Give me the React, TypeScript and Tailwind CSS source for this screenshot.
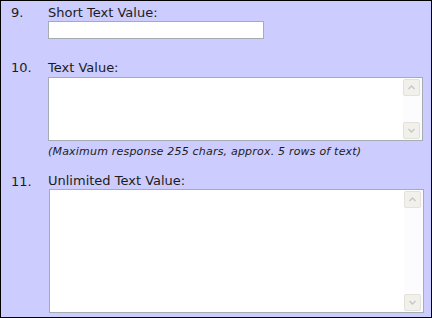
import React from "react";

const ScrollBtn = ({ dir }: { dir: "up" | "down" }) => (
  <div className="flex h-[17px] w-[17px] items-center justify-center rounded-[2px] border border-[#e3e1d9] bg-[#f1f0ea]">
    <svg width="7" height="5" viewBox="0 0 7 5">
      <path
        d={dir === "up" ? "M0.5 4 L3.5 1 L6.5 4" : "M0.5 1 L3.5 4 L6.5 1"}
        fill="none"
        stroke="#c4c6cc"
        strokeWidth="1.4"
      />
    </svg>
  </div>
);

const TextBox = ({ height }: { height: string }) => (
  <div className={`flex w-[375px] border border-[#a5acb2] bg-white ${height}`}>
    <textarea className="flex-1 resize-none overflow-hidden bg-white outline-none" />
    <div className="flex w-[19px] flex-col justify-between bg-[#fcfcfe] py-px pr-[2px]">
      <ScrollBtn dir="up" />
      <ScrollBtn dir="down" />
    </div>
  </div>
);

const Row = ({ num, label, children, numClass = "" }: { num: string; label: string; children: React.ReactNode; numClass?: string }) => (
  <div className="flex">
    <div className={`ml-[10px] w-[37px] leading-[13px] ${numClass}`}>{num}</div>
    <div className="flex flex-col">
      <div className="leading-[13px]">{label}</div>
      {children}
    </div>
  </div>
);

export default function App() {
  return (
    <div
      className="flex h-[318px] w-[432px] flex-col border border-black bg-[#ccccff] pt-[5px] text-[13px] text-[#1c1c1c]"
      style={{ fontFamily: '"DejaVu Sans", Verdana, sans-serif' }}
    >
      <Row num="9." label="Short Text Value:">
        <input className="mt-[2px] h-[18px] w-[216px] border border-[#a5acb2] bg-white outline-none" />
      </Row>
      <div className="mt-[22px]">
        <Row num="10." label="Text Value:">
          <div className="mt-[3px]">
            <TextBox height="h-[64px]" />
          </div>
          <div className="mt-[4px] text-[11px] italic leading-[13px] tracking-[0.2px]">
            (Maximum response 255 chars, approx. 5 rows of text)
          </div>
        </Row>
      </div>
      <div className="mt-[16px]">
        <Row num="11." label="Unlimited Text Value:" numClass="pt-px">
          <div className="mt-[2px] ml-px">
            <TextBox height="h-[124px]" />
          </div>
        </Row>
      </div>
    </div>
  );
}
